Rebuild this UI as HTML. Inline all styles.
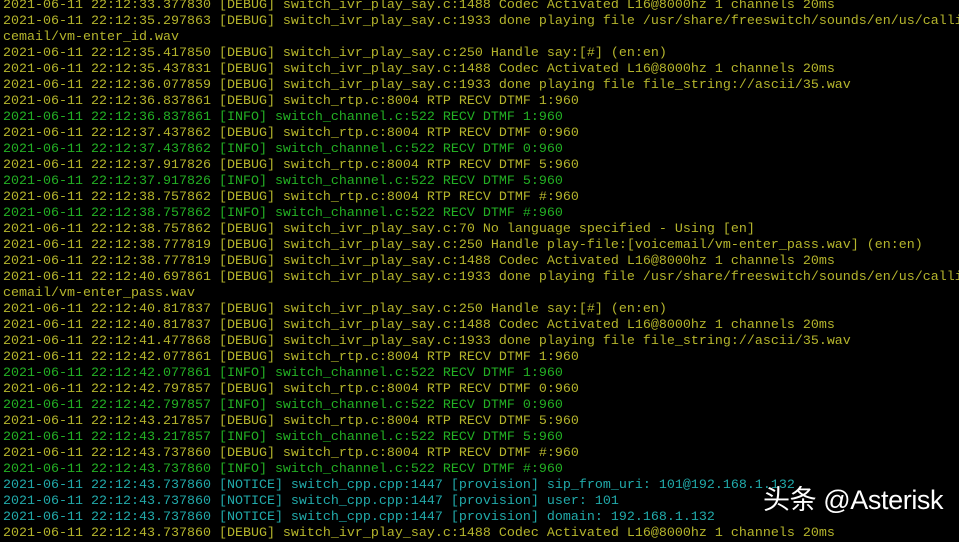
<!DOCTYPE html>
<html><head><meta charset="utf-8"><style>
html,body{margin:0;padding:0;background:#000;width:959px;height:532px;overflow:hidden}
pre{position:absolute;left:3px;top:-2px;margin:0;font-family:"Liberation Mono","Courier New",monospace;font-size:13.33px;line-height:16px;white-space:pre;color:#b5b52c}
.i{color:#23b023}.n{color:#21aaaa}
.wm{position:absolute;left:763px;top:484px;color:#fff;font-family:"Liberation Sans","Noto Sans CJK SC",sans-serif;font-size:27px;line-height:32px;letter-spacing:-0.4px;text-shadow:0 0 2px rgba(0,0,0,.6)}
</style></head><body>
<pre>2021-06-11 22:12:33.377830 [DEBUG] switch_ivr_play_say.c:1488 Codec Activated L16@8000hz 1 channels 20ms
2021-06-11 22:12:35.297863 [DEBUG] switch_ivr_play_say.c:1933 done playing file /usr/share/freeswitch/sounds/en/us/calli
cemail/vm-enter_id.wav
2021-06-11 22:12:35.417850 [DEBUG] switch_ivr_play_say.c:250 Handle say:[#] (en:en)
2021-06-11 22:12:35.437831 [DEBUG] switch_ivr_play_say.c:1488 Codec Activated L16@8000hz 1 channels 20ms
2021-06-11 22:12:36.077859 [DEBUG] switch_ivr_play_say.c:1933 done playing file file_string://ascii/35.wav
2021-06-11 22:12:36.837861 [DEBUG] switch_rtp.c:8004 RTP RECV DTMF 1:960
<span class="i">2021-06-11 22:12:36.837861 [INFO] switch_channel.c:522 RECV DTMF 1:960</span>
2021-06-11 22:12:37.437862 [DEBUG] switch_rtp.c:8004 RTP RECV DTMF 0:960
<span class="i">2021-06-11 22:12:37.437862 [INFO] switch_channel.c:522 RECV DTMF 0:960</span>
2021-06-11 22:12:37.917826 [DEBUG] switch_rtp.c:8004 RTP RECV DTMF 5:960
<span class="i">2021-06-11 22:12:37.917826 [INFO] switch_channel.c:522 RECV DTMF 5:960</span>
2021-06-11 22:12:38.757862 [DEBUG] switch_rtp.c:8004 RTP RECV DTMF #:960
<span class="i">2021-06-11 22:12:38.757862 [INFO] switch_channel.c:522 RECV DTMF #:960</span>
2021-06-11 22:12:38.757862 [DEBUG] switch_ivr_play_say.c:70 No language specified - Using [en]
2021-06-11 22:12:38.777819 [DEBUG] switch_ivr_play_say.c:250 Handle play-file:[voicemail/vm-enter_pass.wav] (en:en)
2021-06-11 22:12:38.777819 [DEBUG] switch_ivr_play_say.c:1488 Codec Activated L16@8000hz 1 channels 20ms
2021-06-11 22:12:40.697861 [DEBUG] switch_ivr_play_say.c:1933 done playing file /usr/share/freeswitch/sounds/en/us/calli
cemail/vm-enter_pass.wav
2021-06-11 22:12:40.817837 [DEBUG] switch_ivr_play_say.c:250 Handle say:[#] (en:en)
2021-06-11 22:12:40.817837 [DEBUG] switch_ivr_play_say.c:1488 Codec Activated L16@8000hz 1 channels 20ms
2021-06-11 22:12:41.477868 [DEBUG] switch_ivr_play_say.c:1933 done playing file file_string://ascii/35.wav
2021-06-11 22:12:42.077861 [DEBUG] switch_rtp.c:8004 RTP RECV DTMF 1:960
<span class="i">2021-06-11 22:12:42.077861 [INFO] switch_channel.c:522 RECV DTMF 1:960</span>
2021-06-11 22:12:42.797857 [DEBUG] switch_rtp.c:8004 RTP RECV DTMF 0:960
<span class="i">2021-06-11 22:12:42.797857 [INFO] switch_channel.c:522 RECV DTMF 0:960</span>
2021-06-11 22:12:43.217857 [DEBUG] switch_rtp.c:8004 RTP RECV DTMF 5:960
<span class="i">2021-06-11 22:12:43.217857 [INFO] switch_channel.c:522 RECV DTMF 5:960</span>
2021-06-11 22:12:43.737860 [DEBUG] switch_rtp.c:8004 RTP RECV DTMF #:960
<span class="i">2021-06-11 22:12:43.737860 [INFO] switch_channel.c:522 RECV DTMF #:960</span>
<span class="n">2021-06-11 22:12:43.737860 [NOTICE] switch_cpp.cpp:1447 [provision] sip_from_uri: 101@192.168.1.132</span>
<span class="n">2021-06-11 22:12:43.737860 [NOTICE] switch_cpp.cpp:1447 [provision] user: 101</span>
<span class="n">2021-06-11 22:12:43.737860 [NOTICE] switch_cpp.cpp:1447 [provision] domain: 192.168.1.132</span>
2021-06-11 22:12:43.737860 [DEBUG] switch_ivr_play_say.c:1488 Codec Activated L16@8000hz 1 channels 20ms</pre>
<div class="wm">头条 @Asterisk</div>
</body></html>
